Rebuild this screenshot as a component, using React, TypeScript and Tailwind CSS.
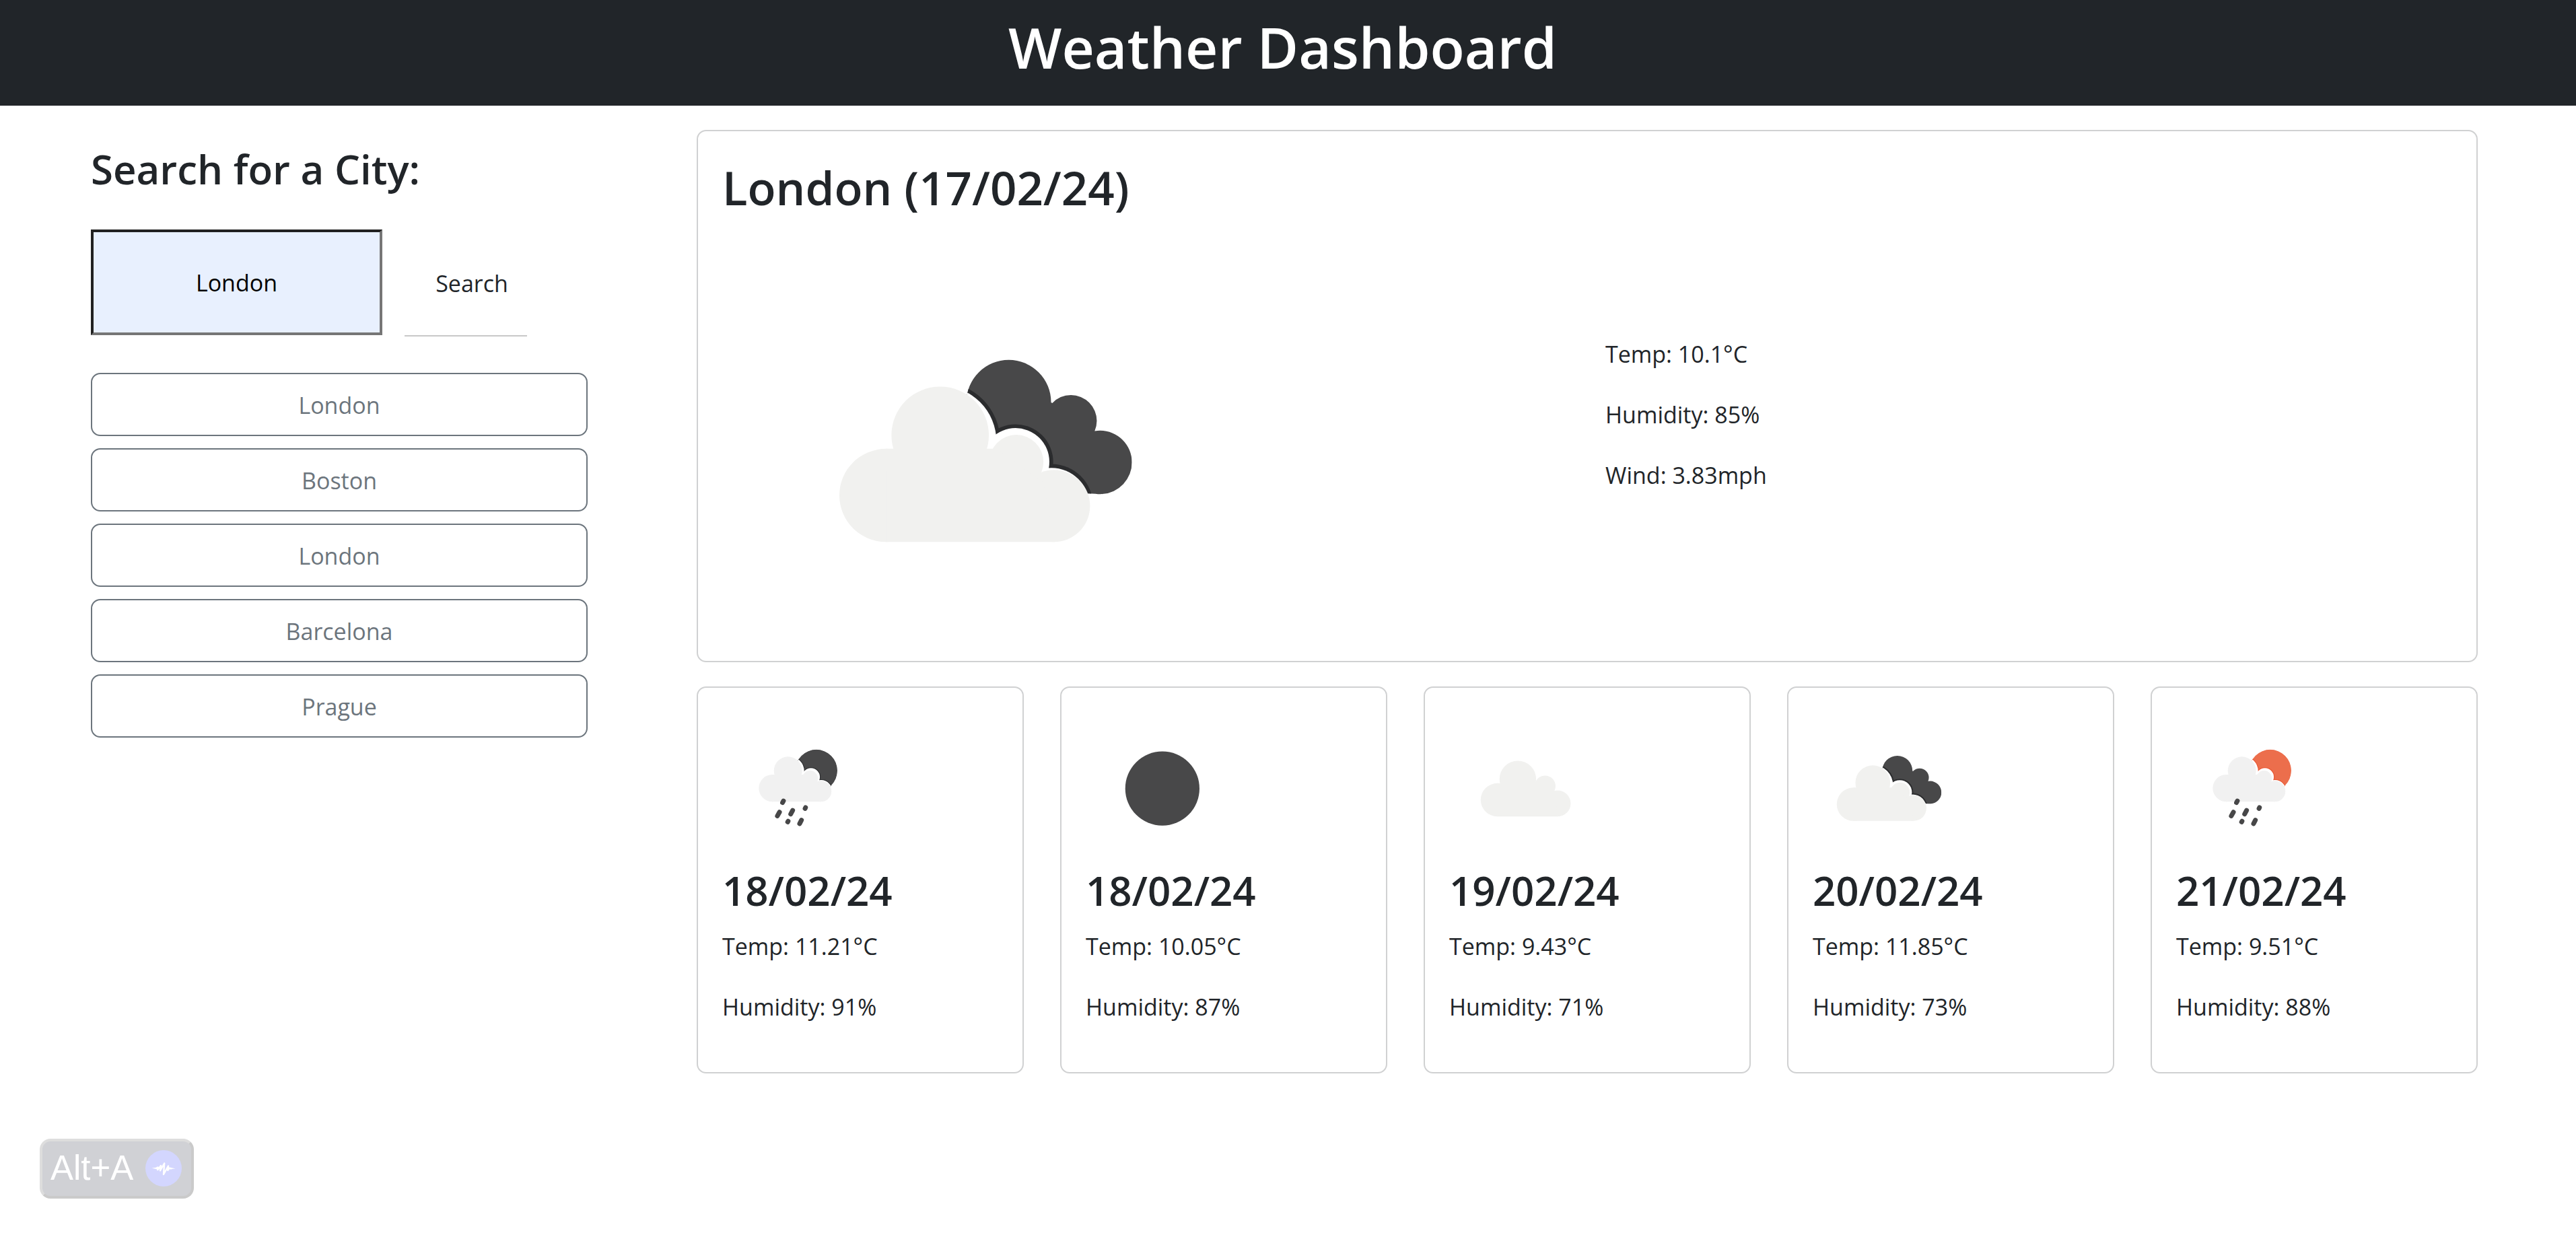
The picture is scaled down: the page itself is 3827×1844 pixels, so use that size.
import React from "react";

type IconKind = "showers-night" | "clear-night" | "clouds" | "broken-clouds" | "showers-day";

const DARK = "#484849";
const LIGHT = "#f1f1ef";

function CloudShape() {
  return (
    <>
      <circle cx="31.8" cy="58" r="11" />
      <circle cx="45.3" cy="44.3" r="12.1" />
      <circle cx="63.3" cy="48.9" r="6.9" />
      <circle cx="71.6" cy="60.4" r="8.6" />
      <path d="M31.8 47H58L70 54L71.6 69H31.8Z" />
    </>
  );
}

function FrontCloud() {
  return (
    <>
      <circle cx="31.8" cy="58" r="11" />
      <circle cx="44.6" cy="43.8" r="11.5" />
      <circle cx="62.6" cy="50.1" r="6.4" />
      <circle cx="71.5" cy="60.5" r="8.5" />
      <path d="M31.8 47H58L69 55L71.6 69H31.8Z" />
    </>
  );
}

function Knockout({ grow, fill }: { grow: number; fill: string }) {
  return (
    <g fill={fill}>
      <circle cx="39.8" cy="48.2" r={13.2 + grow} />
      <circle cx="57.5" cy="53" r={8 + grow} />
      <circle cx="66" cy="63.3" r={8.9 + grow} />
    </g>
  );
}

function Showers({ id, disc, edge }: { id: string; disc: string; edge: string }) {
  return (
    <>
      <clipPath id={id}>
        <circle cx="62.1" cy="38.7" r="13.9" />
      </clipPath>
      <g clipPath={`url(#${id})`}>
        <circle cx="62.1" cy="38.7" r="14" fill={disc} />
        <g transform="translate(7.3 3.3) scale(.81)" fill={edge} stroke={edge} strokeWidth="2">
          <CloudShape />
        </g>
        <g transform="translate(7.3 3.3) scale(.81)" fill="#fff" stroke="#fff" strokeWidth=".8">
          <CloudShape />
        </g>
      </g>
      <g transform="translate(7.3 3.3) scale(.81)" fill="#f1f1f1">
        <FrontCloud />
      </g>
      <path
        d="M40.4 58.7L39.8 59.8M37.8 66.1L36.4 68.6M46.5 64.9L45.2 67.4M43.5 72.1L43.2 72.6M55 63.1L54.7 63.7M52.3 71.4L51.1 73.7"
        stroke="#474748"
        strokeWidth="3.1"
        strokeLinecap="round"
      />
    </>
  );
}

function WeatherIcon({ kind, id, label, className }: { kind: IconKind; id: string; label: string; className: string }) {
  return (
    <svg viewBox="0 0 100 100" role="img" aria-label={label} className={className}>
      {kind === "clear-night" && <circle cx="50.6" cy="50.5" r="24.5" fill={DARK} />}
      {kind === "clouds" && (
        <g fill={LIGHT}>
          <CloudShape />
        </g>
      )}
      {kind === "showers-night" && <Showers id={id} disc={DARK} edge="#2b2c2e" />}
      {kind === "showers-day" && <Showers id={id} disc="#ec6e4c" edge="#ea5530" />}
      {kind === "broken-clouds" && (
        <>
          <clipPath id={id}>
            <circle cx="55.9" cy="38.9" r="10" />
            <circle cx="70.6" cy="43.3" r="6.1" />
            <circle cx="77.5" cy="53.1" r="7.5" />
            <path d="M50 40L60 38L66 39L72 42L76 46L78 60.6L66 60L50 50Z" />
          </clipPath>
          <g clipPath={`url(#${id})`}>
            <rect width="100" height="100" fill={DARK} />
            <Knockout grow={0.9} fill="#2b2c2e" />
            <Knockout grow={0} fill="#fff" />
          </g>
          <g transform="translate(-4.9 2.9)" fill={LIGHT}>
            <FrontCloud />
          </g>
        </>
      )}
    </svg>
  );
}

const history = ["London", "Boston", "London", "Barcelona", "Prague"];

const forecast: { date: string; temp: string; humidity: string; icon: IconKind; label: string }[] = [
  { date: "18/02/24", temp: "11.21", humidity: "91", icon: "showers-night", label: "Rain" },
  { date: "18/02/24", temp: "10.05", humidity: "87", icon: "clear-night", label: "Clear night" },
  { date: "19/02/24", temp: "9.43", humidity: "71", icon: "clouds", label: "Cloudy" },
  { date: "20/02/24", temp: "11.85", humidity: "73", icon: "broken-clouds", label: "Broken clouds" },
  { date: "21/02/24", temp: "9.51", humidity: "88", icon: "showers-day", label: "Rain and sun" },
];

export default function App() {
  return (
    <div className="min-h-screen bg-white font-['Open_Sans','Noto_Sans',sans-serif] text-[34px] leading-[54px] text-[#212529]">
      <header className="bg-[#212529] pt-4 pr-4 pb-[33px] text-center">
        <h1 className="text-[84px] leading-[108px] font-semibold text-white">Weather Dashboard</h1>
      </header>

      <div className="flex items-start pt-9 pr-[146px] pl-[135px]">
        <aside className="mr-[162px] w-[738px] shrink-0 pt-5">
          <h2 className="text-[60px] leading-[76px] font-semibold">Search for a City:</h2>
          <form className="mt-[52px] flex items-start" onSubmit={(e) => e.preventDefault()}>
            <input
              type="text"
              aria-label="City"
              defaultValue="London"
              className="h-[157px] w-[433px] border-4 border-t-[#212121] border-r-[#767676] border-b-[#767676] border-l-[#212121] bg-[#e8f0fe] text-center text-black outline-none"
            />
            <button type="submit" className="ml-[33px] h-[159px] w-[182px] border-b-2 border-[#c8c8c8] pt-0.5 pl-[18px]">
              Search
            </button>
          </form>
          <div className="mt-[54px] flex flex-col gap-[18px]">
            {history.map((city, i) => (
              <button
                key={i}
                type="button"
                className="h-[94px] w-full rounded-[14px] border-2 border-[#6c757d] pt-0.5 text-[#6c757d]"
              >
                {city}
              </button>
            ))}
          </div>
        </aside>

        <main className="min-w-0 flex-1">
          <section className="rounded-[14px] border-2 border-[#d0d1d2] px-9 pt-10">
            <h2 className="text-[69px] leading-[86px] font-semibold">London (17/02/24)</h2>
            <div className="mt-8 grid grid-cols-2">
              <WeatherIcon
                kind="broken-clouds"
                id="today-clip"
                label="Broken clouds"
                className="ml-[74px] size-[629px]"
              />
              <div className="pt-[146px] pl-[27px]">
                <p className="mb-9">Temp: 10.1°C</p>
                <p className="mb-9">Humidity: 85%</p>
                <p>Wind: 3.83mph</p>
              </div>
            </div>
          </section>

          <div className="mt-9 grid grid-cols-5 gap-[54px]">
            {forecast.map((day, i) => (
              <section key={i} className="rounded-[14px] border-2 border-[#d0d1d2] px-9 pt-9 pb-[70px]">
                <WeatherIcon kind={day.icon} id={`day-${i}-clip`} label={day.label} className="size-[225px]" />
                <h3 className="mt-0.5 mb-[18px] text-[60px] leading-[76px] font-semibold">{day.date}</h3>
                <p className="mb-9">Temp: {day.temp}°C</p>
                <p>Humidity: {day.humidity}%</p>
              </section>
            ))}
          </div>
        </main>
      </div>

      <button
        type="button"
        className="fixed bottom-[63px] left-[59px] flex h-[89px] w-[229px] items-center justify-between rounded-[16px] border-4 border-t-[#dddddd] border-r-[#cacaca] border-b-[#cacaca] border-l-[#dddddd] bg-[#d0d1d5] pr-3.5 pb-0.5 pl-3 font-['Liberation_Sans',Arial,sans-serif] text-[51px] text-white"
      >
        Alt+A
        <svg viewBox="0 0 54 54" className="size-[54px]" aria-hidden="true">
          <circle cx="27" cy="27" r="27" fill="#d3d6fe" />
          <path d="M9.5 26.8L17 25.6V28.2ZM44.5 27.2L37 26V28.6Z" fill="#fff" />
          <path
            d="M16.5 27L18.5 25.5L18.3 29.3L23 23L22 30.3L28.2 19.5L27 36L34 23.5L33.3 30L36 26.5L38 27.3"
            fill="none"
            stroke="#fff"
            strokeWidth="2.4"
            strokeLinejoin="round"
            strokeLinecap="round"
          />
        </svg>
      </button>
    </div>
  );
}
